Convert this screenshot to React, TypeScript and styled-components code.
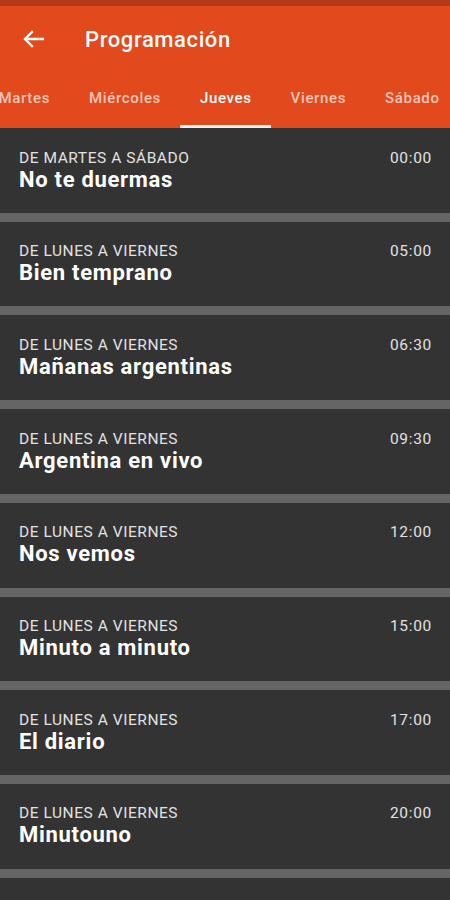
import React from 'react';
import styled, { createGlobalStyle } from 'styled-components';

interface Show {
  days: string;
  title: string;
  time: string;
}

const shows: Show[] = [
  { days: 'De martes a sábado', title: 'No te duermas', time: '00:00' },
  { days: 'De lunes a viernes', title: 'Bien temprano', time: '05:00' },
  { days: 'De lunes a viernes', title: 'Mañanas argentinas', time: '06:30' },
  { days: 'De lunes a viernes', title: 'Argentina en vivo', time: '09:30' },
  { days: 'De lunes a viernes', title: 'Nos vemos', time: '12:00' },
  { days: 'De lunes a viernes', title: 'Minuto a minuto', time: '15:00' },
  { days: 'De lunes a viernes', title: 'El diario', time: '17:00' },
  { days: 'De lunes a viernes', title: 'Minutouno', time: '20:00' },
  { days: 'De lunes a viernes', title: 'Noticias', time: '22:00' },
];

const days = ['Martes', 'Miércoles', 'Jueves', 'Viernes', 'Sábado', 'Domingo'];

const GlobalStyle = createGlobalStyle`
  html, body {
    margin: 0;
    padding: 0;
    background: #333333;
    font-family: Roboto, 'Liberation Sans', sans-serif;
    -webkit-font-smoothing: antialiased;
  }
`;

const App: React.FC = () => {
  return (
    <>
      <GlobalStyle />
      <Screen>
        <StatusBar />
        <AppBar>
          <Toolbar>
            <BackButton aria-label="Volver">
              <svg width="22" height="18" viewBox="0 0 22 18">
                <path
                  d="M21 9H3M10 2L3 9l7 7"
                  fill="none"
                  stroke="#fff"
                  strokeWidth="2.3"
                  strokeLinecap="square"
                />
              </svg>
            </BackButton>
            <Title>Programación</Title>
          </Toolbar>
          <TabStrip>
            <TabRow>
              {days.map((d) => (
                <Tab key={d} active={d === 'Jueves'}>
                  {d}
                </Tab>
              ))}
            </TabRow>
          </TabStrip>
        </AppBar>
        <List>
          {shows.map((s, i) => (
            <Card key={i}>
              <Info>
                <Days>{s.days}</Days>
                <ShowTitle>{s.title}</ShowTitle>
              </Info>
              <Time>{s.time}</Time>
            </Card>
          ))}
        </List>
      </Screen>
    </>
  );
};

const Screen = styled.div`
  width: 450px;
  height: 900px;
  overflow: hidden;
  background: #333333;
  display: flex;
  flex-direction: column;
`;

const StatusBar = styled.div`
  height: 6px;
  background: #b23a1a;
  flex-shrink: 0;
`;

const AppBar = styled.div`
  background: #e2491c;
  flex-shrink: 0;
`;

const Toolbar = styled.div`
  height: 64px;
  padding-top: 2px;
  box-sizing: border-box;
  display: flex;
  align-items: center;
`;

const BackButton = styled.button`
  border: none;
  background: none;
  padding: 0;
  margin-left: 22px;
  width: 22px;
  height: 18px;
  display: flex;
  align-items: center;
  justify-content: center;
`;

const Title = styled.div`
  margin-left: 41px;
  color: #ffffff;
  font-size: 22px;
  font-weight: 500;
  letter-spacing: 0.6px;
`;

const TabStrip = styled.div`
  height: 58px;
  overflow: hidden;
`;

const TabRow = styled.div`
  display: flex;
  height: 100%;
  margin-left: -21px;
`;

const Tab = styled.div<{ active: boolean }>`
  flex-shrink: 0;
  padding: 1px 19.5px 0;
  display: flex;
  align-items: center;
  box-sizing: border-box;
  height: 100%;
  font-size: 15px;
  font-weight: 500;
  letter-spacing: 0.65px;
  color: ${(p) => (p.active ? '#ffffff' : 'rgba(255, 255, 255, 0.7)')};
  border-bottom: 3px solid ${(p) => (p.active ? '#f4f1ef' : 'transparent')};
`;

const List = styled.div`
  display: flex;
  flex-direction: column;
`;

const Card = styled.div`
  height: 93.71px;
  box-sizing: border-box;
  padding: 19.5px 18px 0 19px;
  display: flex;
  justify-content: space-between;
  align-items: flex-start;
  background: #333333;
  border-bottom: 9.71px solid #656565;
  flex-shrink: 0;
`;

const Info = styled.div`
  display: flex;
  flex-direction: column;
`;

const Days = styled.div`
  font-size: 15.5px;
  line-height: 20px;
  letter-spacing: 0.55px;
  color: #e2e2e2;
  text-transform: uppercase;
`;

const ShowTitle = styled.div`
  font-size: 22px;
  line-height: 24px;
  font-weight: 700;
  letter-spacing: 0.7px;
  color: #ffffff;
`;

const Time = styled.div`
  font-size: 15.5px;
  line-height: 20px;
  letter-spacing: 0.7px;
  color: #e2e2e2;
`;

export default App;
